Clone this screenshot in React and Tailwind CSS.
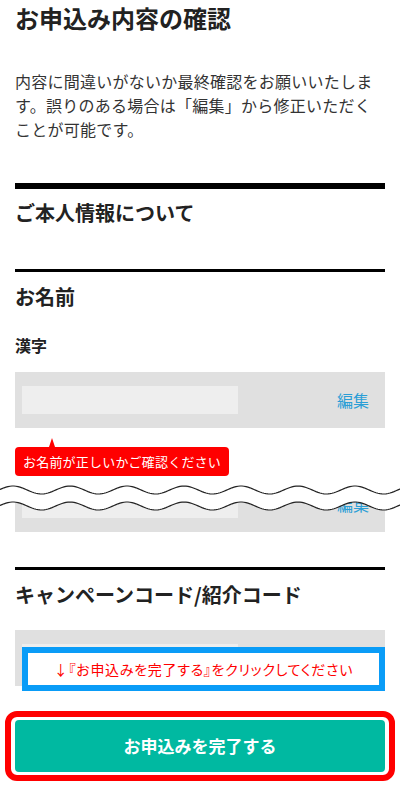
import React from "react";

function wavePath(c, a, period, phase, x0, x1) {
  let d = "";
  for (let x = x0; x <= x1; x += 2) {
    const y = c - a * Math.cos((2 * Math.PI * (x - phase)) / period);
    d += (x === x0 ? "M" : "L") + x + " " + y.toFixed(2) + " ";
  }
  return d;
}

function WaveBreak() {
  const w1 = wavePath(14, 4, 57, 13, -4, 404);
  const w2 = wavePath(30, 4, 57, 13, -4, 404);
  let fill = "M-4 0 L404 0 ";
  for (let x = 404; x >= -4; x -= 2) {
    const y = 30 - 4 * Math.cos((2 * Math.PI * (x - 13)) / 57);
    fill += "L" + x + " " + y.toFixed(2) + " ";
  }
  fill += "Z";
  return (
    <svg
      className="absolute top-0 left-[-15px] w-[400px] h-[40px]"
      viewBox="0 0 400 40"
      aria-hidden="true"
    >
      <path d={fill} fill="#ffffff" />
      <path d={w1} fill="none" stroke="#222" strokeWidth="1.2" />
      <path d={w2} fill="none" stroke="#222" strokeWidth="1.2" />
    </svg>
  );
}

function ValueBox({ showEdit = true }) {
  return (
    <div className="h-[56px] bg-[#e0e0e0] flex items-center justify-between pl-[7px] pr-[16px]">
      <div className="w-[216px] h-[28px] bg-[#eeeeee]" />
      {showEdit && <span className="text-[16px] text-[#2a9ed6] leading-none">編集</span>}
    </div>
  );
}

export default function App() {
  return (
    <div className="w-[400px] h-[804px] overflow-hidden bg-white px-[15px] text-[#222] font-['Noto_Sans_CJK_JP','Noto_Sans',sans-serif]">
      <h1 className="text-[24px] font-bold leading-[36px] h-[36px]">お申込み内容の確認</h1>
      <p className="mt-[33px] text-[16px] leading-[24px] tracking-[0.25px] text-[#333]">
        内容に間違いがないか最終確認をお願いいたします。誤りのある場合は「編集」から修正いただくことが可能です。
      </p>
      <div className="mt-[42px] h-[6px] bg-black" />
      <h2 className="mt-[9px] text-[20px] font-bold leading-[30px]">ご本人情報について</h2>
      <div className="mt-[41px] h-[3px] bg-black" />
      <h3 className="mt-[10px] text-[20px] font-bold leading-[30px]">お名前</h3>
      <h4 className="mt-[21px] text-[16px] font-bold leading-[24px]">漢字</h4>
      <div className="mt-[15px]">
        <ValueBox />
      </div>
      <div className="mt-[10px] flex flex-col items-start">
        <div className="ml-[34px] w-0 h-0 border-l-[3.5px] border-r-[3.5px] border-b-[9px] border-l-transparent border-r-transparent border-b-[#ff0000]" />
        <div className="bg-[#ff0000] rounded-[4px] h-[29px] px-[8px] flex items-center text-white text-[13px] tracking-[0.2px] leading-none">
          お名前が正しいかご確認ください
        </div>
      </div>
      <div className="relative">
        <ValueBox />
        <WaveBreak />
      </div>
      <div className="mt-[35px] h-[3px] bg-black" />
      <h3 className="mt-[10px] text-[20px] font-bold leading-[30px]">キャンペーンコード/紹介コード</h3>
      <div className="relative mt-[20px]">
        <ValueBox showEdit={false} />
        <div className="absolute left-[7px] top-[17px] w-[363px] h-[44px] border-[6px] border-[#0a9cf7] bg-white flex items-center justify-center text-[#ff0000] text-[14px] tracking-[0.7px] leading-none [font-feature-settings:'palt']">
          ↓『お申込みを完了する』をクリックしてください
        </div>
      </div>
      <div className="mt-[25px] mx-[-10px] border-[6px] border-[#ff0000] rounded-[12px] px-[4px] py-[3px]">
        <button className="w-full h-[52px] rounded-[4px] bg-[#00b9a1] text-white text-[17px] font-bold flex items-center justify-center">
          お申込みを完了する
        </button>
      </div>
    </div>
  );
}
